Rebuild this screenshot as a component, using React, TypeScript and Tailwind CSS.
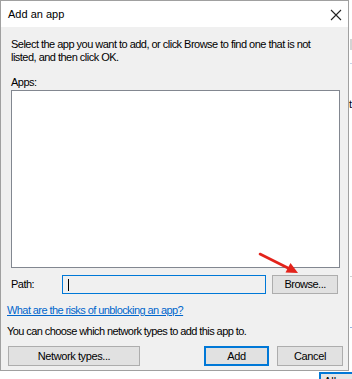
export default function App() {
  return (
    <div className="relative w-[352px] h-[379px] overflow-hidden bg-white font-['Liberation_Sans',Arial,sans-serif] text-[11px] text-black">
      {/* background window fragments */}
      <div className="absolute left-[350px] top-[39px] w-[2px] h-[11px] bg-[#d4d4d4]" />
      <div className="absolute left-[350px] top-[63px] w-[2px] h-px bg-[#c8d4e8]" />
      <div className="absolute left-[349px] top-[99px] w-[3px] h-[10px] overflow-hidden text-[11px] leading-[10px]">t</div>
      <div className="absolute left-[350px] top-[276px] w-[2px] h-px bg-[#d0d0d0]" />
      <div className="absolute left-[350px] top-[327px] w-[2px] h-px bg-[#9ab4e0]" />
      <div className="absolute left-[319px] top-[372px] w-[60px] h-[20px] border-2 border-[#0078d7] bg-[#e5e5e5] flex pt-[1px] leading-[13px] pl-[3px]">
        Allow
      </div>

      {/* dialog */}
      <div className="relative flex flex-col w-[349px] h-[371px] border border-[#a0a0a0] bg-[#f0f0f0]">
        <div className="flex items-center justify-between h-[26px] bg-white pl-[7px] pr-[6px]">
          <span className="text-[11px] leading-[13px] mt-[1px]">Add an app</span>
          <svg width="12" height="12" viewBox="0 0 12 12" className="mt-[1px]">
            <path d="M1 1 L11 11 M11 1 L1 11" stroke="#222" strokeWidth="1.1" fill="none" />
          </svg>
        </div>

        <div className="flex flex-col px-[10px] pt-[11px] tracking-[-0.52px]">
          <p className="leading-[13px]">
            Select the app you want to add, or click Browse to find one that is not
            <br />
            listed, and then click OK.
          </p>
          <p className="leading-[13px] mt-[12px]">Apps:</p>
          <div className="mt-[1px] w-[329px] h-[178px] bg-white border border-[#828790]" />
          <div className="mt-[7px] flex items-center h-[19px]">
            <span className="w-[51px] leading-[13px]">Path:</span>
            <div className="w-[205px] h-[19px] border border-[#0078d7] bg-[#f0f0f0] flex items-center pl-[5px]">
              <div className="w-px h-[12px] bg-black" />
            </div>
            <button className="ml-[6px] w-[66px] h-[19px] bg-[#e1e1e1] border border-[#adadad] flex items-center justify-center leading-[13px]">
              Browse...
            </button>
          </div>
        </div>

        <div className="flex flex-col pl-[6px] mt-[10px] tracking-[-0.58px]">
          <a className="leading-[13px] text-[#0066cc] underline w-fit">What are the risks of unblocking an app?</a>
          <p className="leading-[13px] mt-[8px]">You can choose which network types to add this app to.</p>
          <div className="flex mt-[8px] pl-[1px] tracking-[-0.4px]">
            <button className="w-[132px] h-[20px] bg-[#e1e1e1] border border-[#adadad] flex items-center justify-center leading-[13px]">
              Network types...
            </button>
            <button className="ml-[64px] w-[65px] h-[20px] bg-[#e1e1e1] border-2 border-[#0078d7] flex items-center justify-center leading-[13px]">
              Add
            </button>
            <button className="ml-[8px] w-[66px] h-[20px] bg-[#e1e1e1] border border-[#adadad] flex items-center justify-center leading-[13px]">
              Cancel
            </button>
          </div>
        </div>
      </div>

      {/* red annotation arrow */}
      <svg className="absolute left-0 top-0 pointer-events-none" width="352" height="379" viewBox="0 0 352 379">
        <line x1="260" y1="254" x2="288" y2="268" stroke="#e3231b" strokeWidth="2.6" strokeLinecap="round" />
        <polygon points="298,273 285.5,272.5 290.5,263" fill="#e3231b" />
      </svg>
    </div>
  );
}
